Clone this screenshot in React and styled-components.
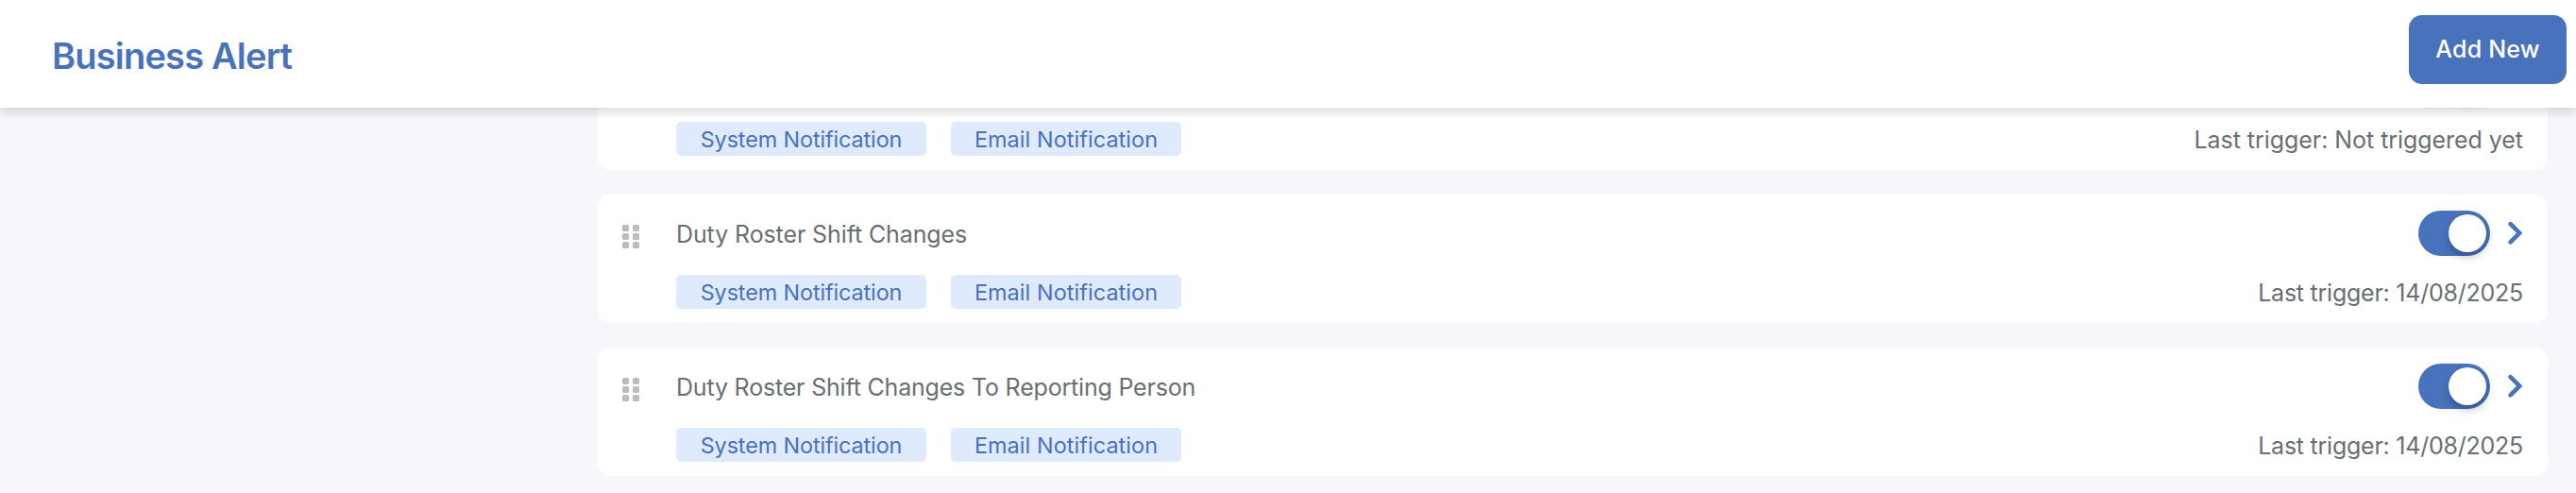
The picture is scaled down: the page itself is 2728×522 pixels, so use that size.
import React from 'react';
import styled, { createGlobalStyle } from 'styled-components';

const blue = 'rgb(72, 114, 188)';
const grey = 'rgb(104, 111, 115)';

const GlobalStyle = createGlobalStyle`
  body {
    margin: 0;
    background: rgb(245, 247, 251);
    font-family: Inter, "Liberation Sans", sans-serif;
  }
`;

const Page = styled.div`
  display: flex;
  flex-direction: column;
  height: 522px;
  overflow: hidden;
`;

const Header = styled.header`
  position: relative;
  z-index: 1;
  display: flex;
  justify-content: space-between;
  align-items: flex-start;
  box-sizing: border-box;
  flex: none;
  height: 114px;
  padding: 16px 10px 0px 55px;
  background: white;
  box-shadow: 0 5px 10px rgba(0, 0, 0, 0.14);
`;

const PageTitle = styled.h1`
  margin: 18px 0px 0px;
  font-size: 38px;
  font-weight: 600;
  line-height: 51px;
  letter-spacing: -0.8px;
  color: ${blue};
`;

const AddButton = styled.button`
  width: 167px;
  height: 73px;
  padding: 0px 0px 1px;
  border: none;
  border-radius: 14px;
  font-family: inherit;
  font-size: 25px;
  font-weight: 500;
  letter-spacing: 0.2px;
  color: white;
  background: ${blue};
`;

const Content = styled.main`
  flex: 1;
  min-height: 0;
  overflow: hidden;
  padding: 0px 30px 0px 633px;
`;

const AlertList = styled.div`
  display: flex;
  flex-direction: column;
  gap: 26px;
  margin-top: -70px;
`;

const Card = styled.div`
  display: flex;
  gap: 39px;
  box-sizing: border-box;
  height: 136px;
  padding: 17px 27px 15px 26px;
  border-radius: 14px;
  background: white;
`;

const DragHandle = styled.div`
  display: grid;
  grid-template-columns: 7px 7px;
  grid-auto-rows: 7px;
  gap: 2px 4px;
  margin-top: 15px;
`;

const Dot = styled.div`
  border-radius: 1.5px;
  background: rgb(188, 188, 188);
`;

const CardBody = styled.div`
  display: flex;
  flex-direction: column;
  flex: 1;
  gap: 20px;
`;

const Row = styled.div`
  display: flex;
  justify-content: space-between;
  align-items: center;
  height: ${(props) => props.$height}px;
`;

const AlertName = styled.div`
  padding-top: 2px;
  font-size: 25px;
  line-height: 32px;
  letter-spacing: ${(props) => props.$spacing || 0}px;
  color: ${grey};
`;

const Controls = styled.div`
  display: flex;
  align-items: center;
  gap: 19px;
`;

const Toggle = styled.div`
  display: flex;
  justify-content: flex-end;
  box-sizing: border-box;
  width: 76px;
  height: 48px;
  padding: 4px;
  border-radius: 24px;
  background: ${blue};
  box-shadow: 0 0 30px rgba(0, 0, 0, 0.02);
`;

const Knob = styled.div`
  width: 40px;
  height: 40px;
  border-radius: 50%;
  background: white;
  box-shadow: 0 5px 8px rgba(0, 0, 0, 0.25);
`;

const Tags = styled.div`
  display: flex;
  gap: 26px;
`;

const Tag = styled.div`
  box-sizing: border-box;
  width: ${(props) => props.$width}px;
  height: 36px;
  padding-top: 1px;
  border-radius: 5px;
  font-size: 23.4px;
  line-height: 35px;
  letter-spacing: ${(props) => props.$spacing}px;
  text-align: center;
  white-space: nowrap;
  color: ${blue};
  background: rgb(223, 234, 253);
`;

const LastTrigger = styled.div`
  margin-right: -1px;
  padding-top: 2px;
  font-size: 25px;
  line-height: 32px;
  letter-spacing: ${(props) => props.$spacing}px;
  white-space: nowrap;
  color: ${grey};
`;

const alerts = [
  { id: 1, name: '', lastTrigger: 'Not triggered yet', triggerSpacing: -0.05 },
  { id: 2, name: 'Duty Roster Shift Changes', nameSpacing: -0.11, lastTrigger: '14/08/2025', triggerSpacing: -0.24 },
  { id: 3, name: 'Duty Roster Shift Changes To Reporting Person', nameSpacing: -0.19, lastTrigger: '14/08/2025', triggerSpacing: -0.24 },
];

const Chevron = () => (
  <svg width="15" height="26" viewBox="0 0 15 26" fill="none" stroke={blue} strokeWidth="4.6" strokeLinecap="round">
    <path d="M2.6 3.1 L12.2 12.7 L2.6 22.3" />
  </svg>
);

class AlertCard extends React.Component {

  render() {
    const { name, nameSpacing, lastTrigger, triggerSpacing } = this.props.alert;

    return (
      <Card>
        <DragHandle>
          {[0, 1, 2, 3, 4, 5].map((dot) => <Dot key={dot} />)}
        </DragHandle>
        <CardBody>
          <Row $height={48}>
            <AlertName $spacing={nameSpacing}>{name}</AlertName>
            <Controls>
              <Toggle><Knob /></Toggle>
              <Chevron />
            </Controls>
          </Row>
          <Row $height={36}>
            <Tags>
              <Tag $width={265} $spacing={-0.12}>System Notification</Tag>
              <Tag $width={244} $spacing={0.08}>Email Notification</Tag>
            </Tags>
            <LastTrigger $spacing={triggerSpacing}>{`Last trigger: ${lastTrigger}`}</LastTrigger>
          </Row>
        </CardBody>
      </Card>
    );
  }

}

class App extends React.Component {

  render() {
    return (
      <Page>
        <GlobalStyle />
        <Header>
          <PageTitle>Business Alert</PageTitle>
          <AddButton>Add New</AddButton>
        </Header>
        <Content>
          <AlertList>
            {alerts.map((alert) => <AlertCard key={alert.id} alert={alert} />)}
          </AlertList>
        </Content>
      </Page>
    );
  }

}

export default App;
